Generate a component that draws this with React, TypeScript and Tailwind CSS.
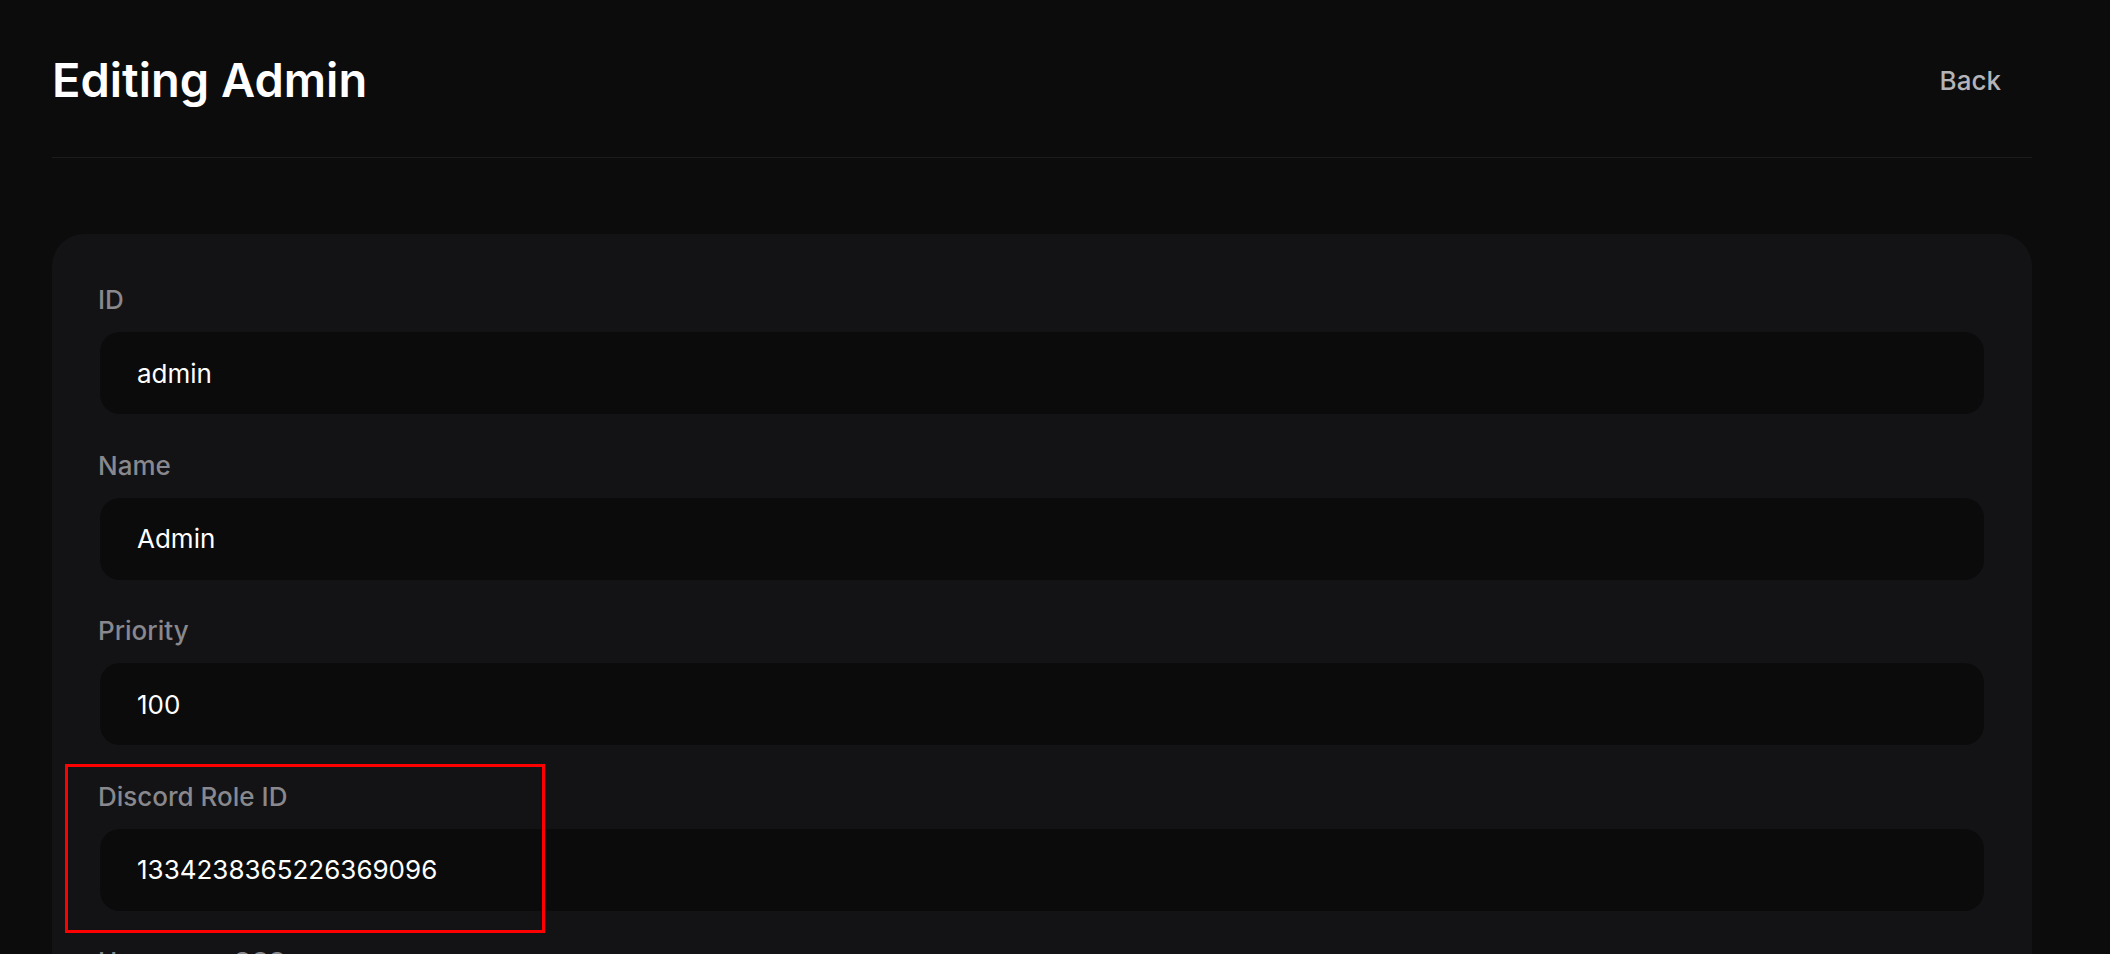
import React from "react";

type Field = { label: string; value: string; marked?: boolean };

const fields: Field[] = [
  { label: "ID", value: "admin" },
  { label: "Name", value: "Admin" },
  { label: "Priority", value: "100" },
  { label: "Discord Role ID", value: "1334238365226369096", marked: true },
  { label: "Username CSS", value: "" },
];

const FormField = ({ label, value, marked }: Field) => (
  <div className="relative flex flex-col">
    <label className="mb-4 -ml-[2px] text-[26px] font-medium leading-8 text-[#88888d]">{label}</label>
    <input
      readOnly
      value={value}
      className="h-[82px] w-full rounded-[20px] bg-[#0b0b0c] pl-[37px] text-[26px] text-white outline-none"
    />
    {marked && (
      <div className="pointer-events-none absolute -left-[35px] -top-[17px] h-[169px] w-[480px] border-[3px] border-[#ff0000]" />
    )}
  </div>
);

export default function App() {
  return (
    <div className="min-h-screen overflow-hidden bg-[#0c0c0d] pl-[52px] pr-[78px] font-['Inter',sans-serif]">
      <header className="flex items-center justify-between border-b border-[#1c1c1f] pb-[53px] pt-[56px]">
        <h1 className="text-[47px] font-semibold leading-[48px] text-white">Editing Admin</h1>
        <button className="px-[31px] py-1 text-[26px] font-medium text-[#b4b4b8]">Back</button>
      </header>

      <main className="mt-[76px] rounded-[32px] bg-[#131316] px-12 pb-12 pt-[50px]">
        <div className="flex flex-col gap-[35.5px]">
          {fields.map((f) => (
            <FormField key={f.label} {...f} />
          ))}
        </div>
      </main>
    </div>
  );
}
